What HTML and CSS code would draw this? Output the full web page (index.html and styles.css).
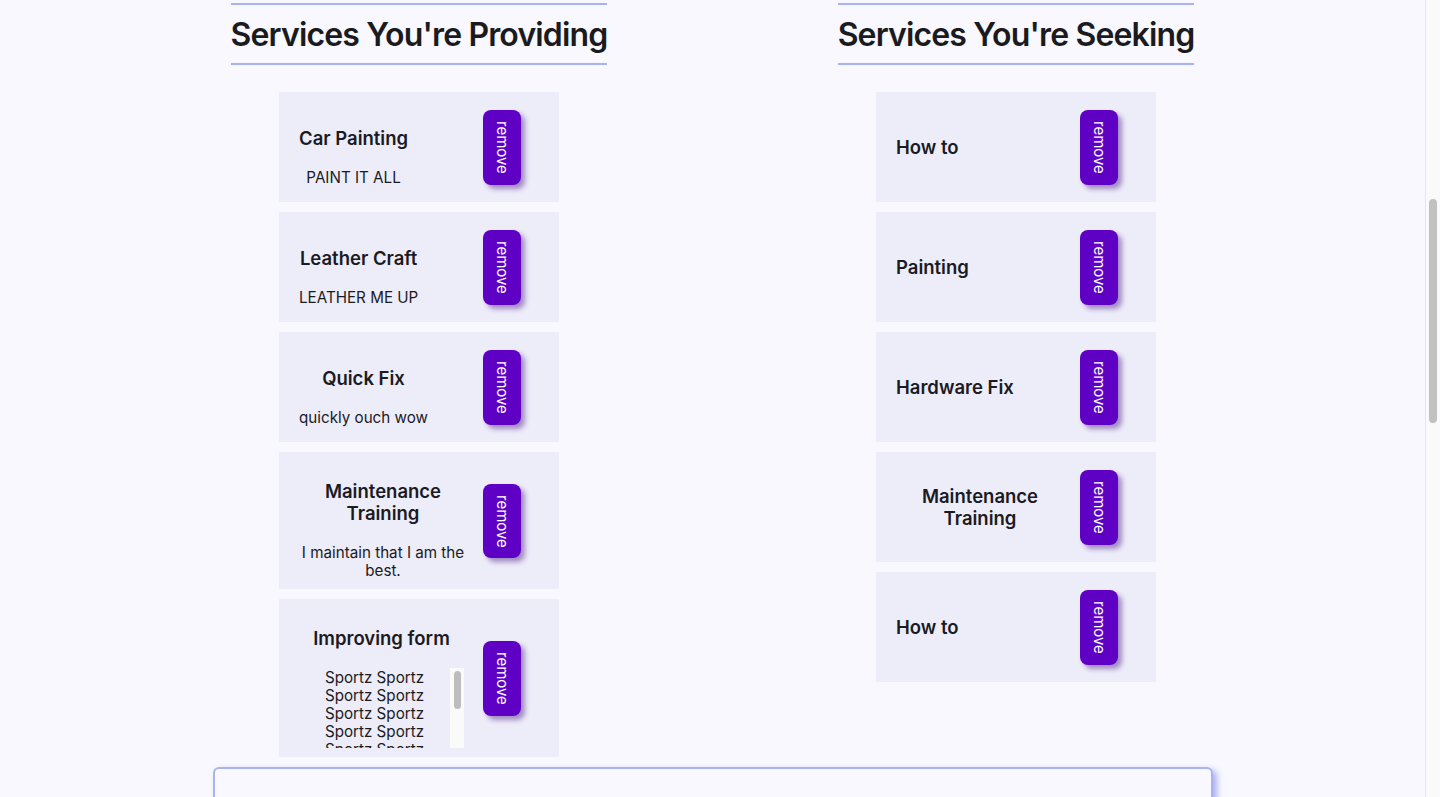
FILE: index.html
```html
<!DOCTYPE html>
<html lang="en">
<head>
<meta charset="utf-8">
<title>Services</title>
<link rel="stylesheet" href="styles.css">
</head>
<body>
<div class="page">
  <main class="main">
    <div class="container">
      <div class="columns">
        <section class="col col-left">
          <h2 class="col-title">Services You're Providing</h2>
          <div class="card-list">
            <div class="card">
              <div class="card-text">
                <h3 class="card-title">Car Painting</h3>
                <p class="card-desc">PAINT IT ALL</p>
              </div>
              <button class="remove-btn">remove</button>
            </div>
            <div class="card">
              <div class="card-text">
                <h3 class="card-title">Leather Craft</h3>
                <p class="card-desc">LEATHER ME UP</p>
              </div>
              <button class="remove-btn">remove</button>
            </div>
            <div class="card">
              <div class="card-text">
                <h3 class="card-title">Quick Fix</h3>
                <p class="card-desc">quickly ouch wow</p>
              </div>
              <button class="remove-btn">remove</button>
            </div>
            <div class="card">
              <div class="card-text">
                <h3 class="card-title">Maintenance Training</h3>
                <p class="card-desc">I maintain that I am the best.</p>
              </div>
              <button class="remove-btn">remove</button>
            </div>
            <div class="card">
              <div class="card-text card-text-wide">
                <h3 class="card-title">Improving form</h3>
                <div class="desc-box">
                  <div class="card-desc desc-scroll">Sportz Sportz<br>Sportz Sportz<br>Sportz Sportz<br>Sportz Sportz<br>Sportz Sportz<br>Sportz Sportz<br>Sportz Sportz<br>Sportz Sportz</div>
                  <div class="mini-track"><div class="mini-thumb"></div></div>
                </div>
              </div>
              <button class="remove-btn">remove</button>
            </div>
          </div>
        </section>
        <section class="col col-right">
          <h2 class="col-title">Services You're Seeking</h2>
          <div class="card-list">
            <div class="card">
              <div class="card-text">
                <h3 class="card-title">How to</h3>
              </div>
              <button class="remove-btn">remove</button>
            </div>
            <div class="card">
              <div class="card-text">
                <h3 class="card-title">Painting</h3>
              </div>
              <button class="remove-btn">remove</button>
            </div>
            <div class="card">
              <div class="card-text">
                <h3 class="card-title">Hardware Fix</h3>
              </div>
              <button class="remove-btn">remove</button>
            </div>
            <div class="card">
              <div class="card-text">
                <h3 class="card-title">Maintenance Training</h3>
              </div>
              <button class="remove-btn">remove</button>
            </div>
            <div class="card">
              <div class="card-text">
                <h3 class="card-title">How to</h3>
              </div>
              <button class="remove-btn">remove</button>
            </div>
          </div>
        </section>
      </div>
      <div class="panel"></div>
    </div>
  </main>
  <div class="page-scrollbar"><div class="page-thumb"></div></div>
</div>
</body>
</html>
```
FILE: styles.css
```css
* { box-sizing: border-box; }

html, body {
  margin: 0;
  padding: 0;
  height: 100%;
  overflow: hidden;
}

body {
  background: #f8f8fe;
  font-family: Inter, "Noto Sans", "Liberation Sans", sans-serif;
  color: #1b1b1f;
}

.page {
  display: flex;
  height: 797px;
}

.main {
  flex: 1;
  min-width: 0;
  overflow: hidden;
}

.container {
  width: 1000px;
  margin: 0 auto;
  padding-top: 3px;
}

.columns {
  display: flex;
  justify-content: space-between;
}

.col {
  display: flex;
  flex-direction: column;
  align-items: center;
}

.col-left {
  width: 413px;
}

.col-right {
  width: 393px;
}

.col-title {
  margin: 0 0 27px 0;
  padding: 10px 0 9px 0;
  border-top: 2px solid #aab3f1;
  border-bottom: 2px solid #aab3f1;
  font-size: 32px;
  line-height: 39px;
  font-weight: 600;
  letter-spacing: -0.85px;
  white-space: nowrap;
}

.card-list {
  display: flex;
  flex-direction: column;
  gap: 10px;
}

.card {
  width: 280px;
  min-height: 110px;
  background: #edecf9;
  display: flex;
  justify-content: space-between;
  align-items: center;
  padding: 10px 38px 9px 20px;
}

.card-text {
  max-width: 168px;
  text-align: center;
}

.card-text-wide {
  width: 165px;
}

.card-title {
  margin: 18px 0 19px 0;
  font-size: 18.5px;
  line-height: 22px;
  font-weight: 600;
}

.card-desc {
  margin: 0;
  padding-top: 1px;
  font-size: 15.2px;
  line-height: 18px;
  font-weight: 400;
}

.desc-box {
  display: flex;
  height: 80px;
  margin-top: 2px;
}

.desc-scroll {
  flex: 1;
  overflow: hidden;
  text-align: center;
  padding-top: 1px;
}

.mini-track {
  flex: none;
  width: 14px;
  background: #fafafa;
  padding: 3px 3px 0 4px;
}

.mini-thumb {
  height: 38px;
  background: #bdbdbd;
  border-radius: 4px;
}

.remove-btn {
  flex: none;
  writing-mode: vertical-rl;
  background: #5f01c5;
  color: #ffffff;
  border: none;
  border-radius: 8px;
  padding: 11px 10px;
  font-family: Inter, "Noto Sans", "Liberation Sans", sans-serif;
  font-size: 15px;
  line-height: 18px;
  box-shadow: 4px 4px 5px rgba(70, 20, 130, 0.45);
}

.panel {
  margin-top: 10px;
  height: 120px;
  border: 2px solid #aab3f1;
  border-radius: 6px;
  box-shadow: 4px 3px 6px rgba(120, 130, 220, 0.6);
}

.page-scrollbar {
  flex: none;
  width: 15px;
  background: #fafafa;
  border-left: 1px solid #e6e6ea;
  padding: 199px 3px 0 3px;
}

.page-thumb {
  height: 224px;
  background: #c1c1c1;
  border-radius: 5px;
}
```
